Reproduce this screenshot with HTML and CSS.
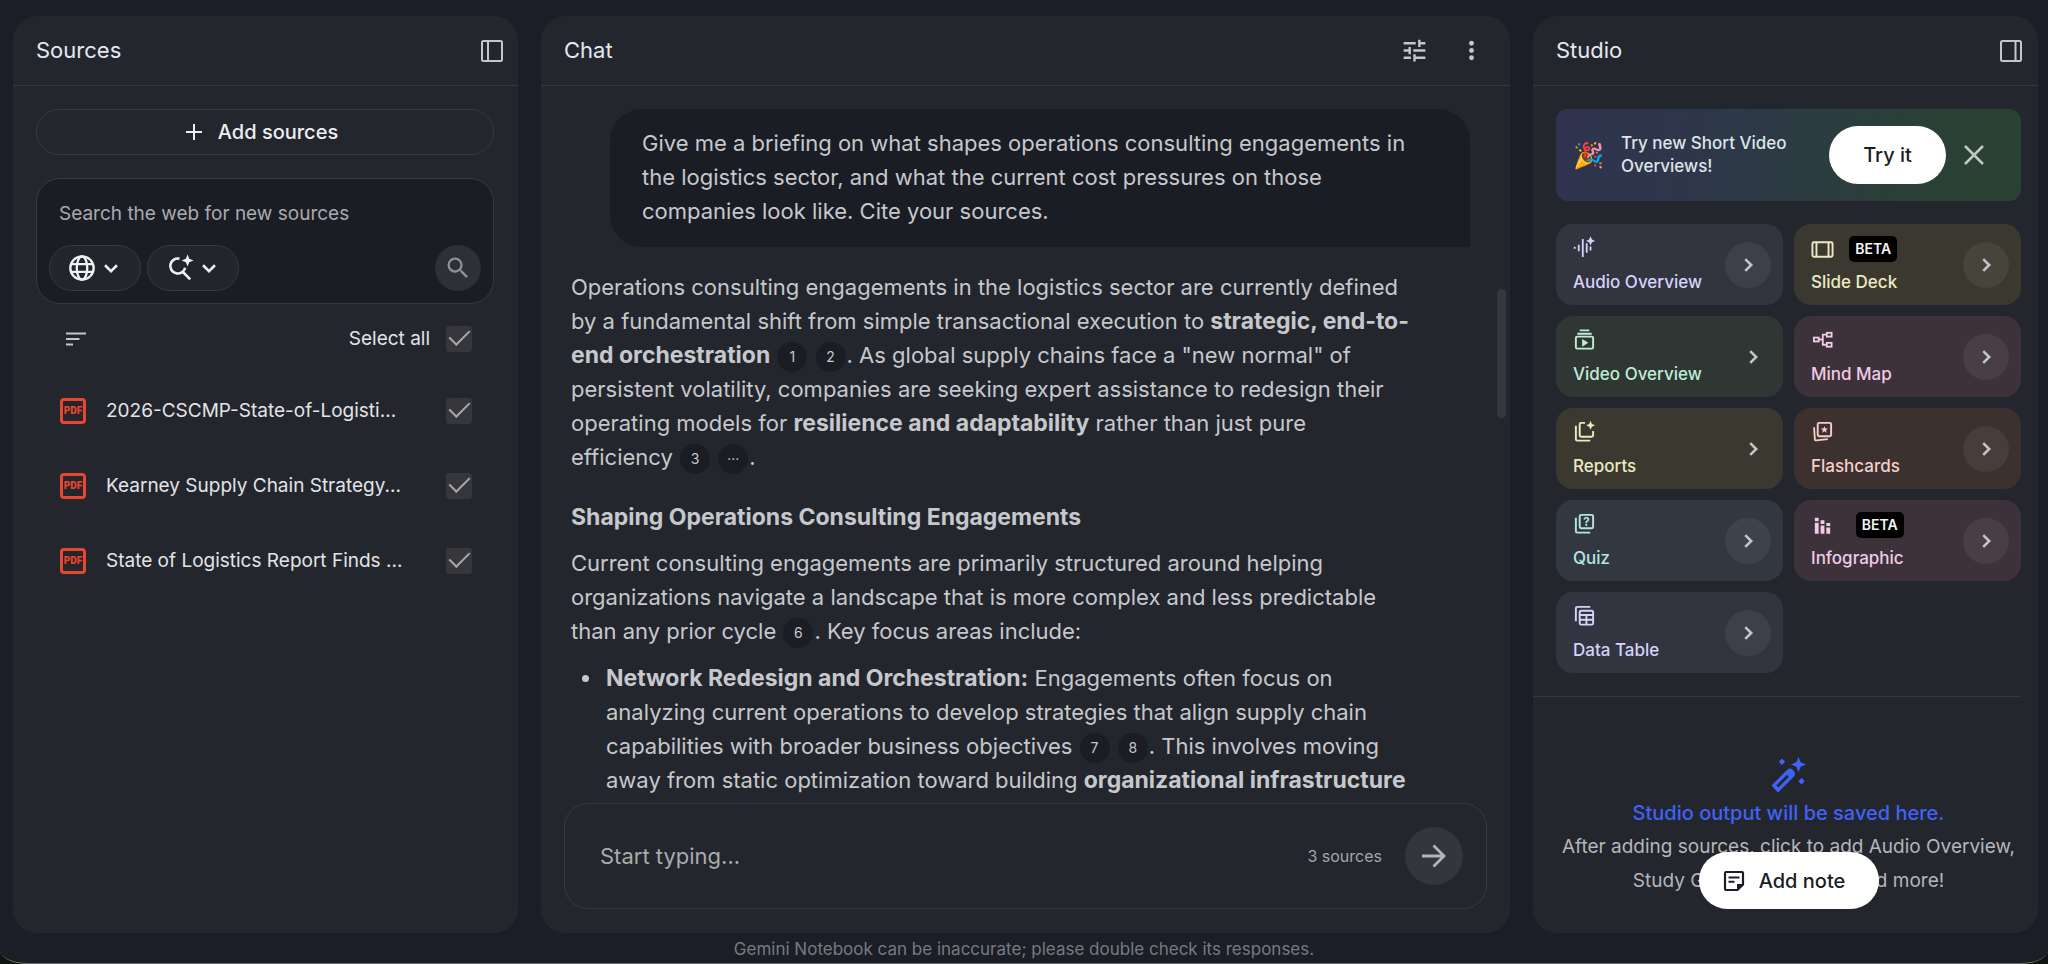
FILE: index.html
```html
<!DOCTYPE html>
<html lang="en">
<head>
<meta charset="utf-8">
<meta name="viewport" content="width=device-width, initial-scale=1">
<title>Gemini Notebook</title>
<link rel="stylesheet" href="styles.css">
</head>
<body>
<svg class="defs" aria-hidden="true">
  <symbol id="chevron-right" viewBox="0 0 24 24"><path d="M9 5.5l6.5 6.5L9 18.500" fill="none" stroke="currentColor" stroke-width="2.800"/></symbol>
  <symbol id="chevron-down" viewBox="0 0 24 24"><path d="M5.500 9l6.500 6.500L18.500 9" fill="none" stroke="currentColor" stroke-width="2.800"/></symbol>
</svg>
<div class="window">
  <main class="panels">

    <section class="panel" aria-label="Sources">
      <header class="panel-header">
        <h2>Sources</h2>
        <button class="icon-button" aria-label="Collapse sources">
          <svg width="24" height="24" viewBox="0 0 24 24" fill="none" stroke="currentColor" stroke-width="2"><rect x="2" y="2" width="20" height="20" rx="1.500"/><path d="M8 2v20"/></svg>
        </button>
      </header>
      <div class="sources-body">
        <button class="add-sources">
          <svg width="16" height="16" viewBox="0 0 16 16" fill="none" stroke="currentColor" stroke-width="2"><path d="M8 0v16M0 8h16"/></svg>
          Add sources
        </button>
        <form class="search">
          <input type="text" aria-label="Search the web" placeholder="Search the web for new sources">
          <div class="search-tools">
            <button type="button" class="chip" aria-label="Web">
              <svg width="28" height="28" viewBox="0 0 24 24" fill="none" stroke="currentColor" stroke-width="2"><circle cx="12" cy="12" r="10"/><ellipse cx="12" cy="12" rx="4.500" ry="10"/><path d="M2.500 8.700h19M2.500 15.300h19"/></svg>
              <svg width="22" height="22"><use href="#chevron-down"/></svg>
            </button>
            <button type="button" class="chip" aria-label="Fast research">
              <svg width="28" height="28" viewBox="0 0 26 26"><path d="M12.500 4.300A7 7 0 1 0 17.800 12.800M15 16l7.500 7.500" fill="none" stroke="currentColor" stroke-width="2.400"/><path d="M20 .5l1.600 3.900 3.900 1.600-3.900 1.600L20 11.500l-1.600-3.900-3.900-1.600 3.900-1.600z" fill="currentColor"/></svg>
              <svg width="22" height="22"><use href="#chevron-down"/></svg>
            </button>
            <button class="search-go" aria-label="Search">
              <svg width="28" height="28" viewBox="0 0 24 24" fill="currentColor"><path d="M15.500 14h-.79l-.28-.27A6.471 6.471 0 0 0 16 9.500 6.500 6.500 0 1 0 9.500 16c1.610 0 3.090-.59 4.230-1.570l.27.28v.79l5 4.990L20.490 19l-4.990-5zm-6 0C7.010 14 5 11.990 5 9.500S7.010 5 9.500 5 14 7.010 14 9.500 11.990 14 9.500 14z"/></svg>
            </button>
          </div>
        </form>
        <div class="select-row">
          <button class="icon-button" aria-label="Sort">
            <svg width="20" height="14" viewBox="0 0 20 14" fill="none" stroke="currentColor" stroke-width="2"><path d="M0 1.500h20M0 7h13.500M0 12.500h7"/></svg>
          </button>
          <label class="select-all">Select all <input type="checkbox" checked></label>
        </div>
        <ul class="source-list">
          <li><label><span class="pdf">PDF</span><span class="source-name">2026-CSCMP-State-of-Logisti...</span><input type="checkbox" checked></label></li>
          <li><label><span class="pdf">PDF</span><span class="source-name">Kearney Supply Chain Strategy...</span><input type="checkbox" checked></label></li>
          <li><label><span class="pdf">PDF</span><span class="source-name">State of Logistics Report Finds ...</span><input type="checkbox" checked></label></li>
        </ul>
      </div>
    </section>

    <section class="panel" aria-label="Chat">
      <header class="panel-header chat-header">
        <h2>Chat</h2>
        <button class="icon-button" aria-label="Configure chat">
          <svg width="29" height="29" viewBox="0 0 24 24" fill="currentColor"><path d="M3 17v2h6v-2H3zM3 5v2h10V5H3zm10 16v-2h8v-2h-8v-2h-2v6h2zM7 9v2H3v2h4v2h2V9H7zm14 4v-2H11v2h10zm-6-4h2V7h4V5h-4V3h-2v6z"/></svg>
        </button>
        <button class="icon-button" aria-label="More options">
          <svg width="29" height="29" viewBox="0 0 24 24" fill="currentColor"><circle cx="12" cy="6" r="2"/><circle cx="12" cy="12" r="2"/><circle cx="12" cy="18" r="2"/></svg>
        </button>
      </header>
      <div class="thread">
        <p class="bubble">Give me a briefing on what shapes operations consulting engagements in the logistics sector, and what the current cost pressures on those companies look like. Cite your sources.</p>
        <article class="answer">
          <p>Operations consulting engagements in the logistics sector are currently defined by a fundamental shift from simple transactional execution to <strong>strategic, end-to-end orchestration</strong> <button class="cite">1</button> <button class="cite">2</button>. As global supply chains face a "new normal" of persistent volatility, companies are seeking expert assistance to redesign their operating models for <strong>resilience and adaptability</strong> rather than just pure <span class="keep">efficiency <button class="cite">3</button> <button class="cite">···</button>.</span></p>
          <h3>Shaping Operations Consulting Engagements</h3>
          <p>Current consulting engagements are primarily structured around helping organizations navigate a landscape that is more complex and less predictable than any prior cycle <button class="cite">6</button>. Key focus areas include:</p>
          <ul>
            <li><strong>Network Redesign and Orchestration:</strong> Engagements often focus on analyzing current operations to develop strategies that align supply chain capabilities with broader business objectives <button class="cite">7</button> <button class="cite">8</button>. This involves moving away from static optimization toward building <strong>organizational infrastructure</strong></li>
          </ul>
        </article>
      </div>
      <div class="scroll-thumb"></div>
      <form class="composer">
        <input type="text" aria-label="Message" placeholder="Start typing...">
        <span class="source-count">3 sources</span>
        <button class="send" aria-label="Send">
          <svg width="24" height="24" viewBox="0 0 24 24" fill="none" stroke="currentColor" stroke-width="2.800"><path d="M0 12h22M11.500 1.500L22 12 11.500 22.500"/></svg>
        </button>
      </form>
    </section>

    <section class="panel" aria-label="Studio">
      <header class="panel-header studio-header">
        <h2>Studio</h2>
        <button class="icon-button" aria-label="Collapse studio">
          <svg width="24" height="24" viewBox="0 0 24 24" fill="none" stroke="currentColor" stroke-width="2"><rect x="2" y="2" width="20" height="20" rx="1.500"/><path d="M16.500 2v20"/></svg>
        </button>
      </header>
      <div class="studio-body">
        <div class="banner">
          <span class="emoji">🎉</span>
          <p>Try new Short Video Overviews!</p>
          <button class="try">Try it</button>
          <button class="icon-button" aria-label="Dismiss">
            <svg width="20" height="20" viewBox="0 0 20 20" fill="none" stroke="currentColor" stroke-width="2.500"><path d="M1 1l18 18M19 1L1 19"/></svg>
          </button>
        </div>
        <div class="tiles">
          <button class="tile lilac">
            <span class="tile-main"><span class="tile-head"><svg width="23" height="23" viewBox="0 0 24 24"><path d="M1.800 11.200v2M6 9v7M10.200 3v19M14.300 7.500v10M18.300 11v4" fill="none" stroke="currentColor" stroke-width="1.900"/><path d="M18.300.3l1.500 3.300 3.300 1.500-3.300 1.500-1.500 3.300-1.500-3.300-3.300-1.500 3.300-1.500z" fill="currentColor"/></svg></span>Audio Overview</span>
            <span class="go"><svg width="22" height="22"><use href="#chevron-right"/></svg></span>
          </button>
          <button class="tile olive">
            <span class="tile-main"><span class="tile-head"><svg width="23" height="23" viewBox="0 0 24 24" fill="none" stroke="currentColor" stroke-width="2"><rect x="1.500" y="4.500" width="21" height="15" rx="1.500"/><path d="M5.700 4.500v15M18.300 4.500v15"/></svg><span class="beta">BETA</span></span>Slide Deck</span>
            <span class="go"><svg width="22" height="22"><use href="#chevron-right"/></svg></span>
          </button>
          <button class="tile green">
            <span class="tile-main"><span class="tile-head"><svg width="23" height="23" viewBox="0 0 24 24"><path d="M7 2.500h10M4.500 6h15" fill="none" stroke="currentColor" stroke-width="1.900"/><rect x="3" y="9" width="18" height="12.500" rx="1.500" fill="none" stroke="currentColor" stroke-width="2"/><path d="M9.500 11.500v8l6.500-4z" fill="currentColor"/></svg></span>Video Overview</span>
            <span class="go plain"><svg width="22" height="22"><use href="#chevron-right"/></svg></span>
          </button>
          <button class="tile pink">
            <span class="tile-main"><span class="tile-head"><svg width="23" height="23" viewBox="0 0 24 24" fill="none" stroke="currentColor" stroke-width="1.900"><rect x="3" y="10" width="5" height="4"/><rect x="16.500" y="5" width="5" height="4"/><rect x="16.500" y="15.500" width="5" height="4"/><path d="M8 12h4M16.500 7H12.300v10.500h4.200"/></svg></span>Mind Map</span>
            <span class="go"><svg width="22" height="22"><use href="#chevron-right"/></svg></span>
          </button>
          <button class="tile olive">
            <span class="tile-main"><span class="tile-head"><svg width="23" height="23" viewBox="0 0 24 24"><path d="M3 6v14q0 1.500 1.500 1.500H18M12.500 3H8.500Q7 3 7 4.500v11.500Q7 17.500 8.500 17.500h11q1.500 0 1.500-1.500v-4.500" fill="none" stroke="currentColor" stroke-width="2"/><path d="M18.300.8l1.400 3.400 3.300 1.400-3.300 1.400-1.400 3.300-1.400-3.300-3.300-1.400 3.300-1.400z" fill="currentColor"/></svg></span>Reports</span>
            <span class="go plain"><svg width="22" height="22"><use href="#chevron-right"/></svg></span>
          </button>
          <button class="tile brown">
            <span class="tile-main"><span class="tile-head"><svg width="23" height="23" viewBox="0 0 24 24"><path d="M3.200 7.500l.8 12.500q.1 1.500 1.600 1.300l12-1.300" fill="none" stroke="currentColor" stroke-width="1.900"/><rect x="7" y="3" width="14" height="14" rx="1.500" fill="none" stroke="currentColor" stroke-width="2"/><path d="M14 6.200l1 2.600 2.700.1-2.100 1.700.8 2.700-2.400-1.500-2.400 1.500.8-2.700-2.100-1.700 2.700-.1z" fill="currentColor"/></svg></span>Flashcards</span>
            <span class="go"><svg width="22" height="22"><use href="#chevron-right"/></svg></span>
          </button>
          <button class="tile teal">
            <span class="tile-main"><span class="tile-head"><svg width="23" height="23" viewBox="0 0 24 24"><path d="M3 6v14q0 1.500 1.500 1.500H18" fill="none" stroke="currentColor" stroke-width="2"/><rect x="7" y="3" width="14" height="14" rx="1.500" fill="none" stroke="currentColor" stroke-width="2"/><text class="mark" x="14" y="14.500" text-anchor="middle">?</text></svg></span>Quiz</span>
            <span class="go"><svg width="22" height="22"><use href="#chevron-right"/></svg></span>
          </button>
          <button class="tile pink">
            <span class="tile-main"><span class="tile-head"><svg width="23" height="23" viewBox="0 0 24 24" fill="currentColor"><path d="M4 4h4v3.500H4zM4 9h4v11.500H4zM10 6.500h4v4h-4zM10 12h4v8.500h-4zM16 9.500h4v3h-4zM16 14h4v6.500h-4z"/></svg><span class="beta">BETA</span></span>Infographic</span>
            <span class="go"><svg width="22" height="22"><use href="#chevron-right"/></svg></span>
          </button>
          <button class="tile lilac">
            <span class="tile-main"><span class="tile-head"><svg width="23" height="23" viewBox="0 0 24 24" fill="none" stroke="currentColor" stroke-width="2"><path d="M3 18V4.500Q3 3 4.500 3H18"/><rect x="7" y="7" width="14" height="14.500" rx="1.500"/><path d="M7 11.500h14M7 16.500h14M14 11.500v10"/></svg></span>Data Table</span>
            <span class="go"><svg width="22" height="22"><use href="#chevron-right"/></svg></span>
          </button>
        </div>
        <hr>
        <div class="empty">
          <svg width="36" height="36" viewBox="0 0 36 36" fill="currentColor"><path d="M27.500 0l2.200 5.300L35 7.500l-5.300 2.200L27.500 15l-2.200-5.300L20 7.500l5.300-2.200zM11 1.500l3.200 3.200L11 7.900 7.800 4.700zM30.500 21l3.200 3.200-3.200 3.200-3.200-3.200z"/><path fill-rule="evenodd" d="M.5 28.500L16.500 12.500q2.500-2 5.500.5l1 1.200q2 2.800 0 5.300L7 35.500zM5.300 28.500l2 2L18 19.800l-2-2z"/></svg>
          <p class="empty-title">Studio output will be saved here.</p>
          <p class="empty-text">After adding sources, click to add Audio Overview, Study Guide, Mind Map, and more!</p>
          <button class="add-note">
            <svg width="22" height="22" viewBox="0 0 22 22"><path d="M14.500 20H3q-1 0-1-1V3q0-1 1-1h16q1 0 1 1v11.500z" fill="none" stroke="currentColor" stroke-width="2.200"/><path d="M14 14h7l-7 7z" fill="currentColor"/><path d="M5.500 7.500h11M5.500 11.800h6" stroke="currentColor" stroke-width="2"/></svg>
            Add note
          </button>
        </div>
      </div>
    </section>

  </main>
  <footer>Gemini Notebook can be inaccurate; please double check its responses.</footer>
</div>
</body>
</html>
```
FILE: styles.css
```css
* { box-sizing: border-box; }

html { background: #12140f; }

body {
  margin: 0;
  color: #c6c8cc;
  font-family: Inter, Roboto, sans-serif;
  font-size: 22px;
  line-height: 34px;
}

h2, h3, p, ul { margin: 0; padding: 0; }

button, input { font: inherit; color: inherit; }

button {
  display: flex;
  align-items: center;
  justify-content: center;
  padding: 0;
  border: 0;
  background: none;
  cursor: pointer;
}

.defs { position: absolute; width: 0; height: 0; }

.window {
  display: flex;
  flex-direction: column;
  height: 100vh;
  background: #1b1e26;
  border-bottom: 1px solid #6a6b6c;
  border-radius: 0 0 28px 28px / 0 0 14px 14px;
  overflow: hidden;
}

.panels {
  flex: 1;
  min-height: 0;
  display: grid;
  grid-template-columns: 505fr 969fr 505fr;
  gap: 23px;
  padding: 16px 10px 0 13px;
}

.panel {
  position: relative;
  display: flex;
  flex-direction: column;
  min-width: 0;
  min-height: 0;
  background: #23262d;
  border-radius: 24px;
}

.panel-header {
  display: flex;
  align-items: center;
  height: 70px;
  flex: none;
  padding: 0 14px 0 23px;
  border-bottom: 1px solid #36383e;
}

.panel-header h2 {
  flex: 1;
  padding-bottom: 2px;
  color: #e6e8ef;
  font-size: 22px;
  font-weight: 400;
}

.chat-header { gap: 28px; padding: 0 24px 0 23px; }
.studio-header { padding: 0 15px 0 23px; }

.icon-button { color: #c4c7c9; }

/* Sources */

.sources-body { padding: 23px 24px 0 23px; }

.add-sources {
  gap: 16px;
  width: 100%;
  height: 46px;
  padding-right: 6px;
  border: 1px solid #383a42;
  border-radius: 23px;
  color: #eceef2;
  font-size: 20px;
  font-weight: 500;
}

.search {
  margin-top: 23px;
  padding: 18px 12px 12px;
  border: 1px solid #383a42;
  border-radius: 24px;
  background: #1b1d25;
}

.search input {
  display: block;
  width: 100%;
  height: 34px;
  padding: 0 10px;
  border: 0;
  outline: 0;
  background: none;
  font-size: 19px;
}

input::placeholder { color: #a9abae; opacity: 1; }

.search-tools { display: flex; gap: 6px; padding-top: 14px; }

.chip {
  gap: 4px;
  width: 92px;
  height: 46px;
  border: 1px solid #383a42;
  border-radius: 23px;
  background: #22252c;
  color: #f0f1f3;
}

.search-go {
  width: 46px;
  height: 46px;
  margin-left: auto;
  border-radius: 50%;
  background: #2f3036;
  color: #909196;
}

.select-row,
.select-all,
.source-list label {
  display: flex;
  align-items: center;
}

.select-row {
  justify-content: space-between;
  height: 69px;
  padding: 0 22px 0 30px;
}

.select-all { gap: 16px; color: #e2e4e8; font-size: 19px; }

.source-list { list-style: none; }

.source-list label {
  height: 75px;
  padding: 0 22px 0 24px;
  color: #e2e4e8;
  font-size: 19px;
}

.source-name { flex: 1; margin-left: 20px; white-space: nowrap; }

.pdf {
  display: flex;
  align-items: center;
  justify-content: center;
  width: 26px;
  height: 26px;
  border: 3px solid #e8472f;
  border-radius: 4px;
  color: #e8472f;
  font-family: Roboto, sans-serif;
  font-size: 10px;
  font-weight: 900;
}

input[type="checkbox"] {
  appearance: none;
  display: flex;
  justify-content: center;
  width: 26px;
  height: 26px;
  margin: 0;
  border-radius: 3px;
  background: #37373b;
}

input[type="checkbox"]:checked::after {
  content: "";
  width: 9px;
  height: 18px;
  margin-top: -1px;
  border: solid #a8a8ac;
  border-width: 0 2px 2px 0;
  transform: rotate(45deg);
}

/* Chat */

.thread { flex: 1; min-height: 0; overflow: hidden; padding: 23px 40px 0 30px; }

.bubble {
  margin-left: 39px;
  padding: 17px 32px 19px;
  border-radius: 32px 32px 0 32px;
  background: #1b1d25;
}

.answer { margin-top: 23px; padding-right: 56px; }
.answer h3 { margin: 26px 0 12px; font-size: 23px; font-weight: 700; }
.answer strong { font-size: 23px; font-weight: 700; }
.answer ul { margin-top: 13px; padding-left: 32px; }
.answer li { padding-left: 3px; }

.keep { white-space: nowrap; }

.cite {
  display: inline-flex;
  width: 30px;
  height: 30px;
  margin: 0 1px;
  border-radius: 50%;
  background: #1b1d25;
  font-size: 14px;
  line-height: 20px;
  vertical-align: 1px;
}

.scroll-thumb {
  position: absolute;
  top: 273px;
  right: 4px;
  width: 9px;
  height: 129px;
  border-radius: 5px;
  background: #37383c;
}

.composer {
  display: flex;
  align-items: center;
  height: 106px;
  flex: none;
  margin: 0 23px 24px;
  padding: 0 23px 0 35px;
  border: 1px solid #383a42;
  border-radius: 24px;
}

.composer input {
  flex: 1;
  min-width: 0;
  padding: 0;
  border: 0;
  outline: 0;
  background: none;
}

.source-count { color: #a3a5a9; font-size: 16px; }

.send {
  width: 58px;
  height: 58px;
  margin-left: 23px;
  border-radius: 50%;
  background: #35363d;
  color: #b4b5b9;
}

/* Studio */

.studio-body {
  flex: 1;
  display: flex;
  flex-direction: column;
  padding: 23px 17px 0 23px;
}

.banner {
  display: flex;
  align-items: center;
  height: 92px;
  padding: 0 37px 0 17px;
  border-radius: 12px;
  background: linear-gradient(100deg, #30334f 0%, #2d3848 38%, #2a4035 80%, #294132 100%);
}

.emoji { width: 32px; font-size: 25px; }

.banner p {
  flex: 1;
  padding: 0 30px 0 16px;
  color: #dfe3ea;
  font-size: 17px;
  font-weight: 500;
  line-height: 23px;
}

.try {
  width: 117px;
  height: 58px;
  margin-right: 18px;
  border-radius: 29px;
  background: #fff;
  color: #1b1d25;
  font-size: 20px;
  font-weight: 500;
}

.tiles {
  display: grid;
  grid-template-columns: 1fr 1fr;
  gap: 11px;
  margin-top: 23px;
}

.tile {
  justify-content: space-between;
  height: 81px;
  padding: 12px 12px 12px 17px;
  border-radius: 17px;
  font-size: 17px;
  font-weight: 500;
  line-height: 22px;
  text-align: left;
}

.tile-main {
  display: flex;
  flex-direction: column;
  justify-content: space-between;
  height: 100%;
}

.tile-head { display: flex; align-items: center; justify-content: space-between; }

.beta {
  padding: 2px 6px;
  border-radius: 5px;
  background: #000;
  color: #f5f5f5;
  font-size: 14px;
  font-weight: 600;
}

.go {
  display: flex;
  align-items: center;
  justify-content: center;
  width: 46px;
  height: 46px;
  border-radius: 50%;
  background: rgba(255, 255, 255, 0.06);
  color: #c4c5c9;
}

.go.plain { width: 36px; background: none; }

.mark { fill: currentColor; font-size: 12px; font-weight: 700; }

.lilac { background: #32343f; color: #d4d3fa; }
.olive { background: #3b392f; color: #ebe9c2; }
.green { background: #303634; color: #bdeed6; }
.pink { background: #3d3239; color: #f0cbe8; }
.brown { background: #3c312f; color: #f5cfc8; }
.teal { background: #323740; color: #b4e6e6; }

hr {
  width: calc(100% + 23px);
  margin: 23px 0 0 -23px;
  border: 0;
  border-top: 1px solid #36383e;
}

.empty {
  position: relative;
  flex: 1;
  display: flex;
  flex-direction: column;
  align-items: center;
  padding-top: 60px;
  color: #3f63f7;
  text-align: center;
}

.empty-title { margin-top: 3px; font-size: 20px; font-weight: 500; }
.empty-text { color: #b4b6ba; font-size: 19px; }

.add-note {
  position: absolute;
  bottom: 24px;
  left: 50%;
  gap: 14px;
  width: 180px;
  height: 57px;
  padding-right: 9px;
  border-radius: 29px;
  background: #fff;
  color: #1b1d25;
  font-size: 20px;
  font-weight: 500;
  transform: translateX(-50%);
}

footer {
  height: 30px;
  flex: none;
  color: #777a80;
  font-size: 17px;
  line-height: 32px;
  text-align: center;
}
```
